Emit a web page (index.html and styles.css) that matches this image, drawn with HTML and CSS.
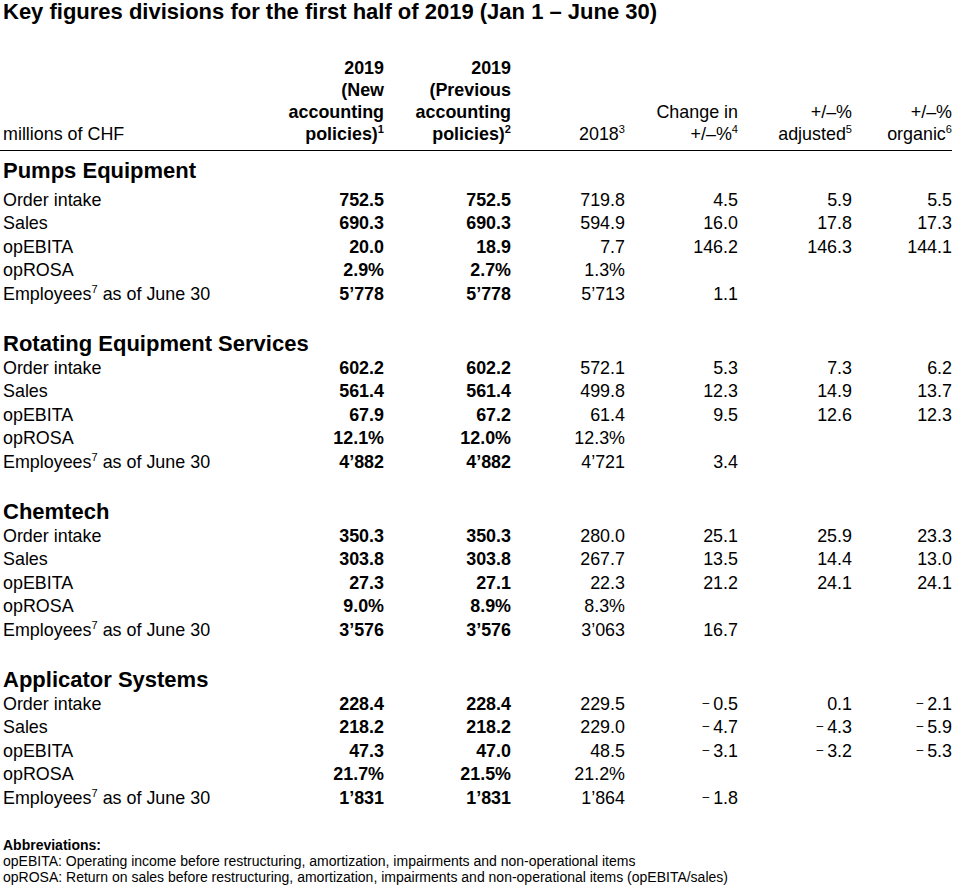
FILE: index.html
```html
<!DOCTYPE html>
<html>
<head>
<meta charset="utf-8">
<link rel="stylesheet" href="styles.css">
</head>
<body>
<h1 class="title">Key figures divisions for the first half of 2019 (Jan 1 – June 30)</h1>
<table class="kf">
  <colgroup>
    <col class="c-label"><col class="c1"><col class="c2"><col class="c3"><col class="c4"><col class="c5"><col class="c6">
  </colgroup>
  <thead>
    <tr>
      <th class="lbl">millions of CHF</th>
      <th class="b">2019<br>(New<br>accounting<br>policies)<sup>1</sup></th>
      <th class="b">2019<br>(Previous<br>accounting<br>policies)<sup>2</sup></th>
      <th>2018<sup>3</sup></th>
      <th>Change in<br>+/–%<sup>4</sup></th>
      <th>+/–%<br>adjusted<sup>5</sup></th>
      <th>+/–%<br>organic<sup>6</sup></th>
    </tr>
  </thead>
  <tbody>
    <tr class="sec first"><td colspan="7">Pumps Equipment</td></tr>
    <tr><td class="lbl">Order intake</td><td class="b">752.5</td><td class="b">752.5</td><td>719.8</td><td>4.5</td><td>5.9</td><td>5.5</td></tr>
    <tr><td class="lbl">Sales</td><td class="b">690.3</td><td class="b">690.3</td><td>594.9</td><td>16.0</td><td>17.8</td><td>17.3</td></tr>
    <tr><td class="lbl">opEBITA</td><td class="b">20.0</td><td class="b">18.9</td><td>7.7</td><td>146.2</td><td>146.3</td><td>144.1</td></tr>
    <tr><td class="lbl">opROSA</td><td class="b">2.9%</td><td class="b">2.7%</td><td>1.3%</td><td></td><td></td><td></td></tr>
    <tr><td class="lbl">Employees<sup>7</sup> as of June 30</td><td class="b">5’778</td><td class="b">5’778</td><td>5’713</td><td>1.1</td><td></td><td></td></tr>
    <tr class="spacer"><td colspan="7"></td></tr>

    <tr class="sec"><td colspan="7">Rotating Equipment Services</td></tr>
    <tr><td class="lbl">Order intake</td><td class="b">602.2</td><td class="b">602.2</td><td>572.1</td><td>5.3</td><td>7.3</td><td>6.2</td></tr>
    <tr><td class="lbl">Sales</td><td class="b">561.4</td><td class="b">561.4</td><td>499.8</td><td>12.3</td><td>14.9</td><td>13.7</td></tr>
    <tr><td class="lbl">opEBITA</td><td class="b">67.9</td><td class="b">67.2</td><td>61.4</td><td>9.5</td><td>12.6</td><td>12.3</td></tr>
    <tr><td class="lbl">opROSA</td><td class="b">12.1%</td><td class="b">12.0%</td><td>12.3%</td><td></td><td></td><td></td></tr>
    <tr><td class="lbl">Employees<sup>7</sup> as of June 30</td><td class="b">4’882</td><td class="b">4’882</td><td>4’721</td><td>3.4</td><td></td><td></td></tr>
    <tr class="spacer"><td colspan="7"></td></tr>

    <tr class="sec"><td colspan="7">Chemtech</td></tr>
    <tr><td class="lbl">Order intake</td><td class="b">350.3</td><td class="b">350.3</td><td>280.0</td><td>25.1</td><td>25.9</td><td>23.3</td></tr>
    <tr><td class="lbl">Sales</td><td class="b">303.8</td><td class="b">303.8</td><td>267.7</td><td>13.5</td><td>14.4</td><td>13.0</td></tr>
    <tr><td class="lbl">opEBITA</td><td class="b">27.3</td><td class="b">27.1</td><td>22.3</td><td>21.2</td><td>24.1</td><td>24.1</td></tr>
    <tr><td class="lbl">opROSA</td><td class="b">9.0%</td><td class="b">8.9%</td><td>8.3%</td><td></td><td></td><td></td></tr>
    <tr><td class="lbl">Employees<sup>7</sup> as of June 30</td><td class="b">3’576</td><td class="b">3’576</td><td>3’063</td><td>16.7</td><td></td><td></td></tr>
    <tr class="spacer"><td colspan="7"></td></tr>

    <tr class="sec"><td colspan="7">Applicator Systems</td></tr>
    <tr><td class="lbl">Order intake</td><td class="b">228.4</td><td class="b">228.4</td><td>229.5</td><td><span class="neg">–</span>0.5</td><td>0.1</td><td><span class="neg">–</span>2.1</td></tr>
    <tr><td class="lbl">Sales</td><td class="b">218.2</td><td class="b">218.2</td><td>229.0</td><td><span class="neg">–</span>4.7</td><td><span class="neg">–</span>4.3</td><td><span class="neg">–</span>5.9</td></tr>
    <tr><td class="lbl">opEBITA</td><td class="b">47.3</td><td class="b">47.0</td><td>48.5</td><td><span class="neg">–</span>3.1</td><td><span class="neg">–</span>3.2</td><td><span class="neg">–</span>5.3</td></tr>
    <tr><td class="lbl">opROSA</td><td class="b">21.7%</td><td class="b">21.5%</td><td>21.2%</td><td></td><td></td><td></td></tr>
    <tr><td class="lbl">Employees<sup>7</sup> as of June 30</td><td class="b">1’831</td><td class="b">1’831</td><td>1’864</td><td><span class="neg">–</span>1.8</td><td></td><td></td></tr>
  </tbody>
</table>
<div class="abbr">
  <p class="abbr-title">Abbreviations:</p>
  <p>opEBITA: Operating income before restructuring, amortization, impairments and non-operational items</p>
  <p>opROSA: Return on sales before restructuring, amortization, impairments and non-operational items (opEBITA/sales)</p>
</div>
</body>
</html>
```
FILE: styles.css
```css
html, body {
  margin: 0;
  padding: 0;
  background: #fff;
  color: #000;
  font-family: "Liberation Sans", Arial, sans-serif;
}

.title {
  margin: 0;
  padding-left: 3px;
  font-family: "Liberation Sans Narrow", "Arial Narrow", "Liberation Sans", sans-serif;
  font-stretch: condensed;
  font-weight: bold;
  font-size: 22px;
  line-height: 24px;
  height: 24px;
  white-space: nowrap;
}

.kf {
  margin-top: 33px;
  width: 952px;
  table-layout: fixed;
  border-collapse: collapse;
  font-size: 17.9px;
}

.c-label { width: 284px; }
.c1 { width: 100px; }
.c2 { width: 127px; }
.c3 { width: 114px; }
.c4 { width: 113px; }
.c5 { width: 114px; }
.c6 { width: 100px; }

.kf th,
.kf td {
  padding: 0;
  text-align: right;
  white-space: nowrap;
}

.kf th {
  font-weight: normal;
  vertical-align: bottom;
  line-height: 22px;
  padding-bottom: 5px;
  border-bottom: 1px solid #000;
}

.kf .b { font-weight: bold; }

.kf .lbl {
  text-align: left;
  padding-left: 3px;
}

.kf td {
  line-height: 23.5px;
  height: 23.5px;
}

.kf sup {
  font-size: 0.62em;
  line-height: 0;
  vertical-align: 0.6em;
}

.kf .neg {
  font-size: 12px;
  line-height: 0;
  vertical-align: 3px;
  margin-right: 4px;
}

.kf .sec td {
  text-align: left;
  padding-left: 3px;
  padding-bottom: 2px;
  font-weight: bold;
  font-size: 22px;
  line-height: 23px;
  height: 23px;
}

.kf .sec.first td {
  padding-top: 7.5px;
  padding-bottom: 7px;
}

.kf .spacer td {
  height: 25.5px;
  line-height: 0;
}

.abbr {
  margin-top: 27px;
  padding-left: 3px;
  font-size: 14px;
  line-height: 16px;
}

.abbr p {
  margin: 0;
  white-space: nowrap;
}

.abbr .abbr-title {
  font-weight: bold;
}
```
